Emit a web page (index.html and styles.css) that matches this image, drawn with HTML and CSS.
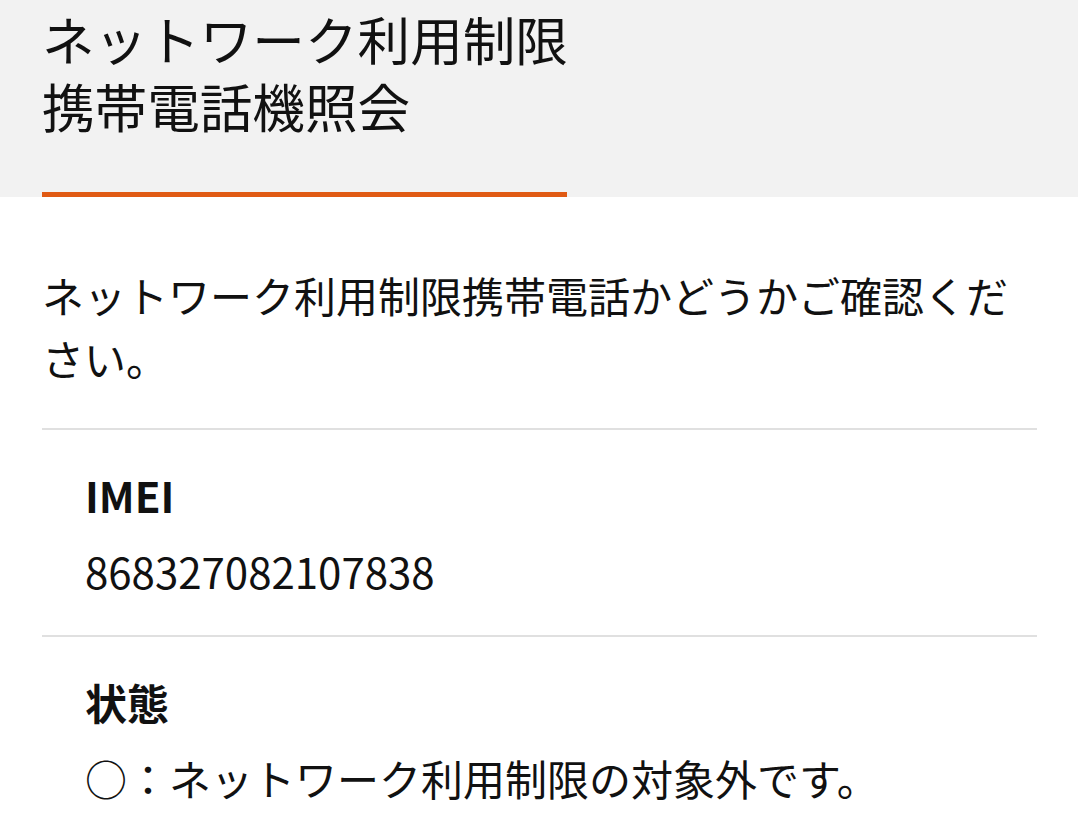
FILE: index.html
```html
<!DOCTYPE html>
<html lang="ja">
<head>
<meta charset="utf-8">
<title>ネットワーク利用制限携帯電話機照会</title>
<link rel="stylesheet" href="styles.css">
</head>
<body>
<header class="page-header">
  <h1 class="page-title">ネットワーク利用制限<br>携帯電話機照会</h1>
  <div class="title-bar"></div>
</header>
<main class="content">
  <p class="lead">ネットワーク利用制限携帯電話かどうかご確認ください。</p>
  <dl class="result">
    <div class="result-row">
      <dt class="result-label">IMEI</dt>
      <dd class="result-value">868327082107838</dd>
    </div>
    <div class="result-row">
      <dt class="result-label">状態</dt>
      <dd class="result-value">○：ネットワーク利用制限の対象外です。</dd>
    </div>
  </dl>
</main>
</body>
</html>
```

FILE: styles.css
```css
* { box-sizing: border-box; }
html, body { margin: 0; padding: 0; background: #fff; }
body {
  font-family: "Noto Sans CJK JP", "Noto Sans", sans-serif;
  color: #111;
  width: 1078px;
  overflow: hidden;
}
.page-header {
  background: #f2f2f2;
  padding: 5px 42px 0;
}
.page-title {
  margin: 0;
  font-size: 52.6px;
  font-weight: 400;
  line-height: 67px;
  letter-spacing: 0;
}
.title-bar {
  margin-top: 53px;
  width: 525px;
  height: 5px;
  background: #e05a14;
}
.content {
  padding: 0 41px 0 42px;
}
.lead {
  margin: 66px 0 0;
  font-size: 42px;
  line-height: 63px;
}
.result {
  margin: 39px 0 0;
}
.result-row {
  border-top: 2px solid #e0e0e0;
  padding: 33px 42px 33px 43px;
}
.result-label {
  font-size: 42px;
  line-height: 63px;
  font-weight: 700;
}
.result-value {
  margin: 13px 0 0;
  font-size: 42px;
  line-height: 63px;
}
```
